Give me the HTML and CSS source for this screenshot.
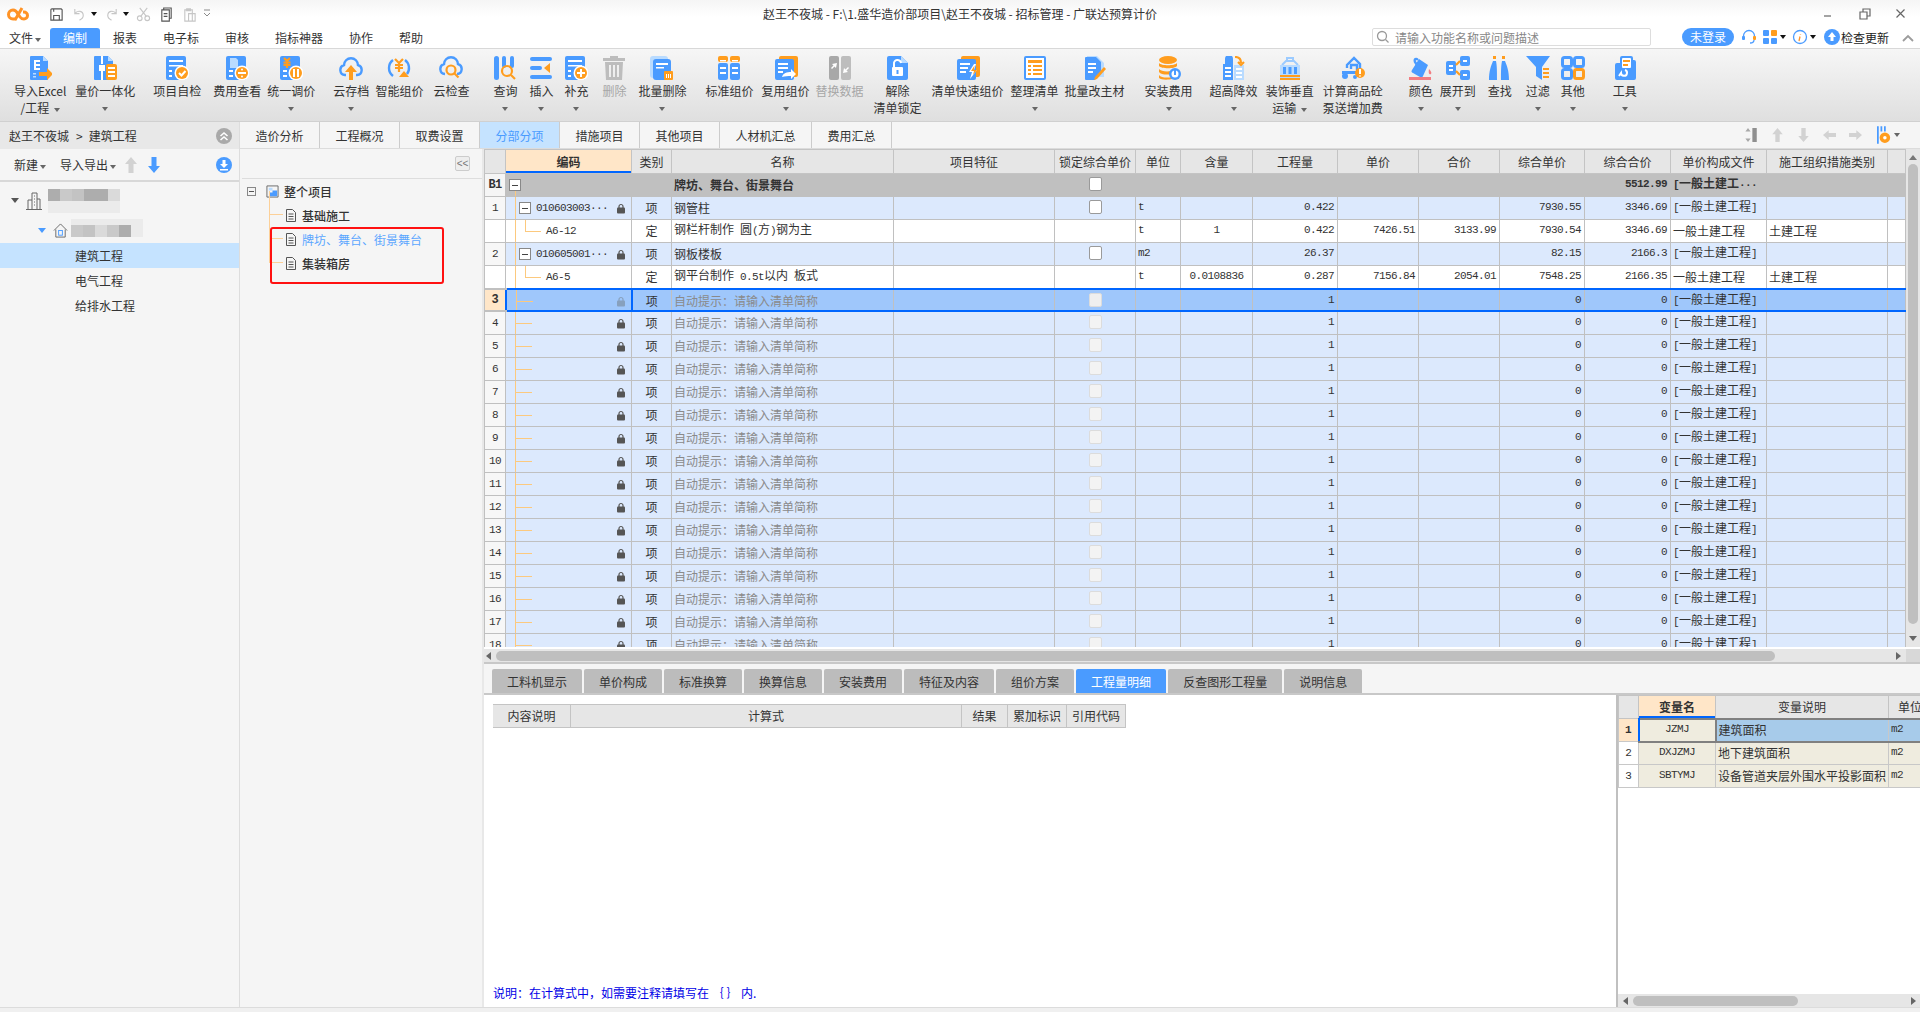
FILE: index.html
```html
<!DOCTYPE html>
<html lang="zh-CN">
<head>
<meta charset="utf-8">
<title>赵王不夜城 - 广联达预算计价</title>
<link rel="stylesheet" href="styles.css">
</head>
<body>
<svg class="defs"><symbol id="lock" viewBox="0 0 8 10"><path class="ln-lk" d="M2 5V3a2 2 0 0 1 4 0v2"/><rect x="0" y="4" width="8" height="6" rx="1"/></symbol><symbol id="docu" viewBox="0 0 10 13"><path class="ln-doc" d="M.5.5h6l3 3v9H.5zM2.500 5h5M2.500 7.500h5M2.500 10h5"/></symbol></svg>
<header class="titlebar">
  <div class="qa">
    <svg class="logo" viewBox="0 0 24 16"><path class="ln-o" d="M9 13H6a4 4 0 0 1 0-9c3 0 4 2 5 4l2 3c1 1.500 2 2 4 2a3.500 3.500 0 0 0 0-7h-1"/><path class="ln-o" d="M8 14l7-12"/></svg>
    <svg class="qi" viewBox="0 0 16 16"><path class="ln-d" d="M2 3a1 1 0 0 1 1-1h10l1 1v11H2zM5 14V9h6v5M5 2v3"/></svg>
    <svg class="qi" viewBox="0 0 16 16"><path class="ln-l" d="M3 2v5h5M3 7c3-4 9-3 9 2 0 3-2 4-4 5"/></svg>
    <i class="tri tri-k"></i>
    <svg class="qi" viewBox="0 0 16 16"><path class="ln-l" d="M13 2v5H8M13 7c-3-4-9-3-9 2 0 3 2 4 4 5"/></svg>
    <i class="tri tri-k"></i>
    <svg class="qi" viewBox="0 0 16 16"><path class="ln-l" d="M4 1l7 9M12 1l-7 9"/><circle class="ln-l" cx="4" cy="12" r="2.500"/><circle class="ln-l" cx="12" cy="12" r="2.500"/></svg>
    <svg class="qi" viewBox="0 0 16 16"><path class="ln-d" d="M3 3h8v12H3zM5 3V1h8v11h-2M5 7h4M5 10h4"/></svg>
    <svg class="qi" viewBox="0 0 16 16"><path class="ln-l" d="M3 3h8v12H3zM5 2h4v2H5zM7 7h7v8H7z"/></svg>
    <svg class="qi-s" viewBox="0 0 8 10"><path class="ln-g" d="M1 1h6M1 4l3 3 3-3"/></svg>
  </div>
  <div class="wintitle">赵王不夜城 - F:\1.盛华造价部项目\赵王不夜城 - 招标管理 - 广联达预算计价</div>
  <div class="winbtns">
    <svg viewBox="0 0 12 12"><path class="ln-w" d="M1 8h7"/></svg>
    <svg viewBox="0 0 12 12"><path class="ln-w" d="M1 4h7v7H1zM4 4V1h7v7H8"/></svg>
    <svg viewBox="0 0 12 12"><path class="ln-w" d="M1.500 1.500l8 8M9.500 1.500l-8 8"/></svg>
  </div>
</header>

<nav class="menubar">
  <span class="file">文件<i class="tri"></i></span>
  <a class="menu active">编制</a><a class="menu">报表</a><a class="menu">电子标</a><a class="menu">审核</a><a class="menu">指标神器</a><a class="menu">协作</a><a class="menu">帮助</a>
  <div class="search">
    <svg viewBox="0 0 14 14"><circle class="ln-s" cx="6" cy="6" r="4.500"/><path class="ln-s" d="M9.500 9.500l3 3"/></svg>
    <span>请输入功能名称或问题描述</span>
  </div>
  <span class="login">未登录</span>
  <svg class="mi mi-head" viewBox="0 0 16 16"><path class="ln-b" d="M2.500 9V7a5.500 5.500 0 0 1 11 0v2"/><rect class="b" x="1" y="7" width="3" height="4" rx="1"/><rect class="o" x="12" y="7" width="3" height="4" rx="1"/><path class="ln-b" d="M13 11c0 2-2 3-4 3"/></svg>
  <svg class="mi mi-grid" viewBox="0 0 16 16"><rect class="b" x="1" y="1" width="6" height="6" rx="1"/><rect class="o" x="9" y="1" width="6" height="6" rx="1"/><rect class="b" x="1" y="9" width="6" height="6" rx="1"/><rect class="b" x="9" y="9" width="6" height="6" rx="1"/></svg>
  <i class="tri tri-k"></i>
  <svg class="mi mi-info" viewBox="0 0 16 16"><circle class="ln-b" cx="8" cy="8" r="6.500"/><path class="ln-o1" d="M8.500 5v.5M8 7.500L7 12"/></svg>
  <i class="tri tri-k"></i>
  <svg class="mi mi-up" viewBox="0 0 16 16"><circle class="b" cx="8" cy="8" r="8"/><path class="w" d="M8 3l4 5H9.500v4h-3V8H4z"/></svg>
  <span class="update">检查更新</span>
  <svg class="mi-chev" viewBox="0 0 12 8"><path class="ln-g2" d="M1 7l5-5 5 5"/></svg>
</nav>

<section class="ribbon">
  <button class="rb g14"><svg viewBox="0 0 24 24"><path class="b" d="M3 0h12l5 5v18a1 1 0 0 1-1 1H3a1 1 0 0 1-1-1V1a1 1 0 0 1 1-1z"/><path class="lb" d="M15 0l5 5h-5z"/><path class="w" d="M6 4h6v2H8v2h4v2H8v2h4v2H6z"/><path class="lb" d="M5 17h3v1.500H5zM5 20h3v1.500H5z"/><path class="o" d="M11 16h8v-4l6 6-6 6v-4h-8z"/></svg><span class="lbl">导入Excel<br>/工程 <i class="tri"></i></span></button>
  <button class="rb g9"><svg viewBox="0 0 24 24"><path class="b" d="M2 0h13l5 5v18a1 1 0 0 1-1 1H2a1 1 0 0 1-1-1V1a1 1 0 0 1 1-1z"/><path class="lb" d="M15 0l5 5h-5z"/><path class="w" d="M8 0h2v8H8zM8 15h2v9H8zM6 9h6v6H6z"/><rect class="o" x="13" y="8" width="11" height="16" rx="2"/><path class="w" d="M15 11h7v2h-7zM15 15h7v2h-7zM15 19h7v2h-7z"/></svg><span class="lbl">量价一体化<i class="tri tri-b"></i></span></button>
  <button class="rb g18"><svg viewBox="0 0 24 24"><rect class="b" x="1" width="20" height="24" rx="2"/><path class="w" d="M4 4h14v2H4zM4 9h14v1.500H4zM4 14h3v2H4zM4 19h3v2H4z"/><circle class="w" cx="17" cy="17" r="7.500"/><circle class="o" cx="17" cy="17" r="6"/><path class="ln-wt" d="M14 17l2.500 2.500 4-4.500"/></svg><span class="lbl">项目自检</span></button>
  <button class="rb g12"><svg viewBox="0 0 24 24"><rect class="b" x="1" width="20" height="24" rx="2"/><path class="lb" d="M5 2h6l2 2v8H5z"/><path class="w" d="M4 14h4v2H4zM4 19h4v2H4z"/><circle class="w" cx="17" cy="17" r="7.500"/><circle class="o" cx="17" cy="17" r="6"/><path class="w" d="M13 16h8v2h-8z"/><circle class="w" cx="17" cy="13.500" r="1"/><circle class="w" cx="17" cy="20.500" r="1"/></svg><span class="lbl">费用查看</span></button>
  <button class="rb g6"><svg viewBox="0 0 24 24"><rect class="b" x="1" width="20" height="24" rx="2"/><path class="oln" d="M5 2l3 3 3-3M8 5v7M4.500 6.500h7M4.500 9h7"/><path class="w" d="M4 14h4v2H4zM4 19h4v2H4z"/><circle class="w" cx="17" cy="17" r="7.500"/><circle class="o" cx="17" cy="17" r="6"/><path class="w" d="M14 13h2v8h-2zM18 13h2v8h-2z"/></svg><span class="lbl">统一调价<i class="tri tri-b"></i></span></button>
  <button class="rb g18"><svg viewBox="0 0 24 24"><path class="ln-cloud" d="M7 19H6a5 5 0 0 1-1-9.800 7 7 0 0 1 14 0A5 5 0 0 1 18 19h-1"/><path class="o" d="M12 9l6 7h-4v8h-4v-8H6z"/></svg><span class="lbl">云存档<i class="tri tri-b"></i></span></button>
  <button class="rb g6"><svg viewBox="0 0 24 24"><path class="ln-cloud" d="M6 20A10 10 0 0 1 6 4M18 4a10 10 0 0 1 2 14"/><path class="oln" d="M8 3l4 4 4-4M12 7v9M8 9h8M8 12h8"/><path class="o" d="M17 15l5 6H12z"/></svg><span class="lbl">智能组价</span></button>
  <button class="rb g10"><svg viewBox="0 0 24 24"><path class="ln-cloud" d="M6 18a5 5 0 0 1-1-9.800 7 7 0 0 1 14 0A5 5 0 0 1 18 18"/><circle class="oln" cx="12" cy="14" r="4.500"/><path class="oln" d="M15.500 17.500l4 4"/></svg><span class="lbl">云检查</span></button>
  <button class="rb g24"><svg viewBox="0 0 24 24"><rect class="b" x="1" width="5" height="24" rx="2.500"/><rect class="b" x="9" width="4" height="12" rx="2"/><rect class="b" x="17" width="4" height="12" rx="2"/><circle class="oln" cx="14" cy="15" r="5"/><path class="oln" d="M18 19l4 4"/></svg><span class="lbl">查询<i class="tri tri-b"></i></span></button>
  <button class="rb g12"><svg viewBox="0 0 24 24"><rect class="b" x="1" y="1" width="22" height="4" rx="2"/><rect class="b" x="1" y="19" width="22" height="4" rx="2"/><rect class="b" x="1" y="10" width="12" height="4" rx="2"/><path class="o" d="M15 12l6-5v10z"/></svg><span class="lbl">插入<i class="tri tri-b"></i></span></button>
  <button class="rb g11"><svg viewBox="0 0 24 24"><rect class="b" x="1" width="20" height="24" rx="2"/><path class="w" d="M4 4h14v2H4zM4 9h14v1.500H4zM4 14h3v2H4zM4 19h3v2H4z"/><circle class="w" cx="17" cy="17" r="7.500"/><circle class="o" cx="17" cy="17" r="6"/><path class="w" d="M16 13h2v3h3v2h-3v3h-2v-3h-3v-2h3z"/></svg><span class="lbl">补充<i class="tri tri-b"></i></span></button>
  <button class="rb g14 dis"><svg viewBox="0 0 24 24"><path class="gf" d="M8 0h8v2h7v3H1V2h7zM3 6h18l-1 18H4zM7 9v12h2V9zM11 9v12h2V9zM15 9v12h2V9z" fill-rule="evenodd"/></svg><span class="lbl">删除</span></button>
  <button class="rb g12"><svg viewBox="0 0 24 24"><rect class="lb" x="0" width="18" height="22" rx="3"/><rect class="b" x="3" y="3" width="18" height="21" rx="3"/><path class="w" d="M6 7h12v2H6zM6 11h8v1.500H6z"/><rect class="o" x="14" y="15" width="9" height="9" rx="1"/><path class="w" d="M16 18h1v4h-1zM18 18h1v4h-1zM20 18h1v4h-1z"/></svg><span class="lbl">批量删除<i class="tri tri-b"></i></span></button>
  <button class="rb g19"><svg viewBox="0 0 24 24"><rect class="o" x="1" width="10" height="6" rx="2"/><rect class="o" x="13" width="10" height="6" rx="2"/><rect class="b" x="1" y="7" width="10" height="17" rx="2"/><rect class="b" x="13" y="7" width="10" height="17" rx="2"/><path class="w" d="M3 4h6v1.500H3zM15 4h6v1.500h-6zM3 11h6v2H3zM15 11h6v2h-6zM3 16h6v2H3zM15 16h6v2h-6z"/></svg><span class="lbl">标准组价</span></button>
  <button class="rb g8"><svg viewBox="0 0 24 24"><rect class="o" x="5" width="19" height="21" rx="2"/><rect class="b" x="1" y="3" width="19" height="21" rx="2"/><path class="w" d="M4 7h10v2H4zM4 11h10v2H4zM4 15h5v2H4z"/><path class="w" d="M8 21c1-4 5-5 9-5v-3l5 5-5 5v-3c-3 0-6 0-9 1z"/></svg><span class="lbl">复用组价<i class="tri tri-b"></i></span></button>
  <button class="rb g6 dis"><svg viewBox="0 0 24 24"><rect class="gd" x="1" width="10" height="24" rx="2"/><rect class="gf" x="13" width="10" height="24" rx="2"/><path class="w" d="M9 7l-1 5-1.500-1.500L4 13l-1-1 2.500-2.500L4 8zM15 17l1-5 1.500 1.500L20 11l1 1-2.500 2.500L20 16z"/></svg><span class="lbl">替换数据</span></button>
  <button class="rb g10"><svg viewBox="0 0 24 24"><path class="b" d="M3 0h12l7 7v15a2 2 0 0 1-2 2H3a2 2 0 0 1-2-2V2a2 2 0 0 1 2-2z"/><path class="lb" d="M15 0l7 7h-7z"/><rect class="w" x="6" y="11" width="11" height="9" rx="1"/><path class="ln-wt" d="M8 11V8a3.500 3.500 0 0 1 7-1"/><path class="b" d="M10.500 14h2v4h-2z"/></svg><span class="lbl">解除<br>清单锁定</span></button>
  <button class="rb g10"><svg viewBox="0 0 24 24"><rect class="o" x="5" width="19" height="21" rx="2"/><rect class="b" x="1" y="3" width="19" height="21" rx="2"/><path class="w" d="M4 7h10v2H4zM4 11h8v2H4zM4 15h6v2H4z"/><path class="w" d="M18 8l-5 8h3l-2 7 7-9h-3l2-6z"/><path class="o" d="M18.500 9.500l-3.500 5.500h3l-1 4 4-5h-3z"/></svg><span class="lbl">清单快速组价</span></button>
  <button class="rb g7"><svg viewBox="0 0 24 24"><rect class="b" x="1" width="22" height="24" rx="2"/><rect class="w" x="3" y="2" width="18" height="20"/><path class="o" d="M5 4h14v3H5zM5 9h3v2H5zM10 9h9v2h-9zM5 13h3v2H5zM10 13h9v2h-9zM5 17h3v2H5zM10 17h9v2h-9z"/></svg><span class="lbl">整理清单<i class="tri tri-b"></i></span></button>
  <button class="rb g6"><svg viewBox="0 0 24 24"><path class="lb" d="M4 0h10l7 7v14H4z"/><path class="b" d="M3 1h10l5 5v9l-6 9H3a1 1 0 0 1-1-1V2a1 1 0 0 1 1-1z"/><path class="w" d="M5 7h8v2H5zM5 11h8v2H5zM5 15h5v2H5z"/><path class="o" d="M21 11l2 2-9 10-3 1 1-3z"/></svg><span class="lbl">批量改主材</span></button>
  <button class="rb g20"><svg viewBox="0 0 24 24"><ellipse class="o" cx="11" cy="4" rx="9" ry="4"/><path class="o" d="M2 7c2 3 16 3 18 0v3c-2 3-16 3-18 0zM2 13c2 3 12 3 15 1l-2 4c-4 1-11 1-13-2zM2 19c2 3 9 3 13 2v2c-4 1-11 1-13-1z"/><circle class="b" cx="18" cy="18" r="6"/><circle class="w" cx="18" cy="18" r="3.500"/><path class="b" d="M17 14h2v5h-2z"/></svg><span class="lbl">安装费用<i class="tri tri-b"></i></span></button>
  <button class="rb g17"><svg viewBox="0 0 24 24"><path class="b" d="M3 3a4 4 0 0 1 8 0v21H1V8h2z"/><path class="lb" d="M12 9h10v15H12z"/><path class="w" d="M3 11h6v2H3zM3 15h6v2H3zM3 19h6v2H3z"/><path class="w" d="M14 12h6v2h-6zM14 16h6v2h-6zM14 20h6v2h-6z"/><path class="oln" d="M13 1c4 0 6 2 6 6M16 6l3 3 3-3"/></svg><span class="lbl">超高降效<i class="tri tri-b"></i></span></button>
  <button class="rb g8"><svg viewBox="0 0 24 24"><path class="ln-lb" d="M4 9l4-4h8l4 4M9 2h6v3H9z"/><rect class="lb" x="2" y="9" width="20" height="15"/><path class="b" d="M5 11h3v7H5zM10.500 11h3v7h-3zM16 11h3v7h-3z"/><path class="o" d="M2 19h20v2H2zM2 22h20v2H2z"/></svg><span class="lbl">装饰垂直<br>运输 <i class="tri"></i></span></button>
  <button class="rb g9"><svg viewBox="0 0 24 24"><path class="ln-cloud" d="M6 12V9l7-7 6 6v5M10 13V9h6v5"/><circle class="b" cx="4" cy="20" r="3"/><circle class="b" cx="14" cy="21" r="2"/><path class="b" d="M1 15h14v3H1z"/><circle class="o" cx="19" cy="17" r="5"/><path class="w" d="M18 13h2v5h-2zM18.500 19h1v2h-1z"/></svg><span class="lbl">计算商品砼<br>泵送增加费</span></button>
  <button class="rb g26"><svg viewBox="0 0 24 24"><path class="b" d="M10 3l9 6-5 11a2 2 0 0 1-3 1L4 17a2 2 0 0 1-1-3z"/><path class="ln-cloud" d="M9 4C7 2 5 3 6 6l2 3"/><path class="rd" d="M20 13c2 2 3 4 2 5s-3 0-2-5zM0 21h22v3H0z"/></svg><span class="lbl">颜色<i class="tri tri-b"></i></span></button>
  <button class="rb g7"><svg viewBox="0 0 24 24"><rect class="b" x="0" y="5" width="10" height="14" rx="2"/><rect class="b" x="14" y="0" width="10" height="10" rx="2"/><rect class="b" x="14" y="14" width="10" height="10" rx="2"/><path class="oln" d="M10 9l4-4M10 15l4 4"/><path class="w" d="M3 9h4v2H3zM3 13h4v2H3zM17 4h4v2h-4zM17 18h4v2h-4z"/></svg><span class="lbl">展开到<i class="tri tri-b"></i></span></button>
  <button class="rb g12"><svg viewBox="0 0 24 24"><path class="o" d="M5 0h3v3H5zM14 0h3v3h-3z"/><path class="b" d="M5 5h3c1 5 1 10 1 19H1c0-9 2-14 4-19zM14 5h3c2 5 4 10 4 19h-8c0-9 0-14 1-19z"/></svg><span class="lbl">查找</span></button>
  <button class="rb g14"><svg viewBox="0 0 24 24"><path class="b" d="M0 0h24l-8 11v13l-6-4v-9z"/><path class="o" d="M17 12h6v2h-6zM17 16h6v2h-6zM17 20h6v2h-6z"/></svg><span class="lbl">过滤<i class="tri tri-b"></i></span></button>
  <button class="rb g11"><svg viewBox="0 0 24 24"><rect class="ln-cloud2" x="1.500" y="1.500" width="9" height="9" rx="2"/><rect class="ln-cloud2" x="13.500" y="1.500" width="9" height="9" rx="2"/><rect class="ln-cloud2" x="1.500" y="13.500" width="9" height="9" rx="2"/><rect class="oln2" x="13.500" y="13.500" width="9" height="9" rx="2"/></svg><span class="lbl">其他<i class="tri tri-b"></i></span></button>
  <button class="rb g28"><svg viewBox="0 0 24 24"><path class="b" d="M7 2a2 2 0 0 1 2-2h9a2 2 0 0 1 2 2v2h1a2 2 0 0 1 2 2v16a2 2 0 0 1-2 2H4a2 2 0 0 1-2-2V9a2 2 0 0 1 2-2h3z"/><rect class="w" x="9" y="2" width="9" height="10" rx="1"/><path class="o" d="M10 4h7v2h-7zM10 8h5v2h-5z"/><path class="ln-wt" d="M12 14a3 3 0 1 1-4 3l-2 3"/></svg><span class="lbl">工具<i class="tri tri-b"></i></span></button>
</section>

<div class="workspace">
  <aside class="left">
    <div class="crumb"><span>赵王不夜城<span class="sep">&gt;</span>建筑工程</span>
      <svg class="circ" viewBox="0 0 16 16"><circle class="gm" cx="8" cy="8" r="8"/><path class="ln-wt2" d="M4.500 8L8 5l3.500 3M4.500 12L8 9l3.500 3"/></svg>
    </div>
    <div class="ltool">
      <span class="lt-a">新建<i class="tri"></i></span>
      <span class="lt-b">导入导出<i class="tri"></i></span>
      <svg class="arr" viewBox="0 0 12 16"><path class="gl" d="M6 0l6 7H8.500v9h-5V7H0z"/></svg>
      <svg class="arr arr2" viewBox="0 0 12 16"><path class="b" d="M6 16l6-7H8.500V0h-5v9H0z"/></svg>
      <svg class="circ" viewBox="0 0 16 16"><circle class="b" cx="8" cy="8" r="8"/><path class="w" d="M6.500 3h3v4H12L8 11 4 7h2.500zM4 12h8v1.500H4z"/></svg>
    </div>
    <div class="ltree">
      <div class="lrow lv0"><i class="tri-l"></i>
        <svg class="lic" viewBox="0 0 16 18"><path class="ln-dk" d="M0 17.500h16M2 17V8h4M6 17V1h5v16M11 7h3v10M8 4h1M8 7h1M8 10h1M8 13h1"/></svg>
        <svg class="mosaic" viewBox="0 0 72 24"><rect class="m1" width="12" height="12"/><rect class="m2" x="12" width="12" height="12"/><rect class="m3" x="24" width="12" height="12"/><rect class="m1" x="36" width="12" height="12"/><rect class="m1" x="48" width="12" height="12"/><rect class="m4" x="60" width="12" height="12"/><rect class="m5" y="12" width="72" height="12"/></svg>
      </div>
      <div class="lrow lv1"><i class="tri-l tri-lb"></i>
        <svg class="lic2" viewBox="0 0 16 16"><path class="ln-dk" d="M1 8l7-7 7 7M3 7v8h10V7"/><rect class="ln-bt" x="6" y="8" width="4" height="5"/></svg>
        <svg class="mosaic" viewBox="0 0 72 24"><rect class="m5" y="0" width="72" height="6"/><rect class="m2" y="6" width="12" height="12"/><rect class="m3" x="12" y="6" width="12" height="12"/><rect class="m4" x="24" y="6" width="12" height="12"/><rect class="m2" x="36" y="6" width="12" height="12"/><rect class="m1" x="48" y="6" width="12" height="12"/><rect class="m5" x="60" y="6" width="12" height="12"/></svg>
      </div>
      <div class="lrow lv2 sel">建筑工程</div>
      <div class="lrow lv2">电气工程</div>
      <div class="lrow lv2">给排水工程</div>
    </div>
  </aside>

  <main class="main">
    <nav class="tabs">
      <a class="tab">造价分析</a><a class="tab">工程概况</a><a class="tab">取费设置</a><a class="tab on">分部分项</a><a class="tab">措施项目</a><a class="tab">其他项目</a><a class="tab">人材机汇总</a><a class="tab">费用汇总</a>
      <div class="tabtools">
        <svg class="tt" viewBox="0 0 14 16"><path class="gl2" d="M3 0l3 4H0zM3 16l3-4H0z"/><rect class="gm2" x="8" y="0" width="5" height="16"/></svg>
        <svg class="tt" viewBox="0 0 12 16"><path class="gl" d="M6 0l6 7H8.500v9h-5V7H0z"/></svg>
        <svg class="tt" viewBox="0 0 12 16"><path class="gl" d="M6 16l6-7H8.500V0h-5v9H0z"/></svg>
        <svg class="tt" viewBox="0 0 16 12"><path class="gl" d="M0 6l7-6v3.500h9v5H7V12z"/></svg>
        <svg class="tt" viewBox="0 0 16 12"><path class="gl" d="M16 6L9 0v3.500H0v5h9V12z"/></svg>
        <svg class="tt tt-g" viewBox="0 0 16 20"><rect class="b" width="2" height="20"/><rect class="b" x="4" width="2" height="6"/><rect class="b" x="8" width="2" height="6"/><circle class="o" cx="9" cy="13" r="6"/><circle class="w" cx="9" cy="13" r="2"/></svg>
        <i class="tri"></i>
      </div>
    </nav>
    <div class="mainbody">
      <aside class="mid">
        <div class="midtool"><button class="collapse">&lt;&lt;</button></div>
        <div class="ptree">
          <div class="prow root"><i class="box"></i>
            <svg class="ric" viewBox="0 0 14 14"><path class="ln-dk" d="M1 1h12v12H1z"/><rect class="lb" x="3" y="3" width="4" height="3"/><path class="b" d="M4 12V8h3V6h5v6z"/></svg>
            整个项目</div>
          <div class="prow leaf"><svg class="doc"><use href="#docu"/></svg>基础施工</div>
          <div class="prow leaf cur"><svg class="doc"><use href="#docu"/></svg>牌坊、舞台、街景舞台</div>
          <div class="prow leaf"><svg class="doc"><use href="#docu"/></svg>集装箱房</div>
        </div>
        <div class="redbox"></div>
      </aside>

      <div class="content">
        <div class="gridwrap">
          <div class="gridclip">
            <table class="grid">
              <colgroup><col class="c0"><col class="c1"><col class="c2"><col class="c3"><col class="c4"><col class="c5"><col class="c6"><col class="c7"><col class="c8"><col class="c9"><col class="c10"><col class="c11"><col class="c12"><col class="c13"><col class="c14"><col></colgroup>
              <thead><tr><th></th><th class="hl">编码</th><th>类别</th><th>名称</th><th>项目特征</th><th>锁定综合单价</th><th>单位</th><th>含量</th><th>工程量</th><th>单价</th><th>合价</th><th>综合单价</th><th>综合合价</th><th>单价构成文件</th><th>施工组织措施类别</th><th></th></tr></thead>
              <tbody>
                <tr class="fb"><td class="rh">B1</td><td class="code"><i class="exp exp0"></i></td><td></td><td>牌坊、舞台、街景舞台</td><td></td><td class="ck"><i class="cb"></i></td><td></td><td></td><td></td><td></td><td></td><td></td><td class="n">5512.99</td><td><span class="m">[</span>一般土建工<span class="m">···</span></td><td></td><td></td></tr>
                <tr class="qd"><td class="rh">1</td><td class="code tl"><i class="exp"></i><span class="cd">010603003···</span><svg class="lk"><use href="#lock"/></svg></td><td class="c">项</td><td>钢管柱</td><td></td><td class="ck"><i class="cb"></i></td><td>t</td><td></td><td class="n">0.422</td><td></td><td></td><td class="n">7930.55</td><td class="n">3346.69</td><td><span class="m">[</span>一般土建工程<span class="m">]</span></td><td></td><td></td></tr>
                <tr class="de"><td class="rh"></td><td class="code tl sub"><span class="cd2">A6-12</span></td><td class="c">定</td><td>钢栏杆制作<span class="m">&nbsp;</span>圆<span class="m">(</span>方<span class="m">)</span>钢为主</td><td></td><td></td><td>t</td><td class="c m">1</td><td class="n">0.422</td><td class="n">7426.51</td><td class="n">3133.99</td><td class="n">7930.54</td><td class="n">3346.69</td><td>一般土建工程</td><td>土建工程</td><td></td></tr>
                <tr class="qd"><td class="rh">2</td><td class="code tl"><i class="exp"></i><span class="cd">010605001···</span><svg class="lk"><use href="#lock"/></svg></td><td class="c">项</td><td>钢板楼板</td><td></td><td class="ck"><i class="cb"></i></td><td>m2</td><td></td><td class="n">26.37</td><td></td><td></td><td class="n">82.15</td><td class="n">2166.3</td><td><span class="m">[</span>一般土建工程<span class="m">]</span></td><td></td><td></td></tr>
                <tr class="de"><td class="rh"></td><td class="code tl sub"><span class="cd2">A6-5</span></td><td class="c">定</td><td>钢平台制作<span class="m">&nbsp;0.5t</span>以内<span class="m">&nbsp;</span>板式</td><td></td><td></td><td>t</td><td class="c m">0.0108836</td><td class="n">0.287</td><td class="n">7156.84</td><td class="n">2054.01</td><td class="n">7548.25</td><td class="n">2166.35</td><td>一般土建工程</td><td>土建工程</td><td></td></tr>
                <tr class="qd auto cur"><td class="rh">3</td><td class="code tl br"><svg class="lk"><use href="#lock"/></svg></td><td class="c">项</td><td class="tip">自动提示：请输入清单简称</td><td></td><td class="ck"><i class="cb"></i></td><td></td><td></td><td class="n">1</td><td></td><td></td><td class="n">0</td><td class="n">0</td><td><span class="m">[</span>一般土建工程<span class="m">]</span></td><td></td><td></td></tr>
                <tr class="qd auto"><td class="rh">4</td><td class="code tl br"><svg class="lk"><use href="#lock"/></svg></td><td class="c">项</td><td class="tip">自动提示：请输入清单简称</td><td></td><td class="ck"><i class="cb"></i></td><td></td><td></td><td class="n">1</td><td></td><td></td><td class="n">0</td><td class="n">0</td><td><span class="m">[</span>一般土建工程<span class="m">]</span></td><td></td><td></td></tr>
                <tr class="qd auto"><td class="rh">5</td><td class="code tl br"><svg class="lk"><use href="#lock"/></svg></td><td class="c">项</td><td class="tip">自动提示：请输入清单简称</td><td></td><td class="ck"><i class="cb"></i></td><td></td><td></td><td class="n">1</td><td></td><td></td><td class="n">0</td><td class="n">0</td><td><span class="m">[</span>一般土建工程<span class="m">]</span></td><td></td><td></td></tr>
                <tr class="qd auto"><td class="rh">6</td><td class="code tl br"><svg class="lk"><use href="#lock"/></svg></td><td class="c">项</td><td class="tip">自动提示：请输入清单简称</td><td></td><td class="ck"><i class="cb"></i></td><td></td><td></td><td class="n">1</td><td></td><td></td><td class="n">0</td><td class="n">0</td><td><span class="m">[</span>一般土建工程<span class="m">]</span></td><td></td><td></td></tr>
                <tr class="qd auto"><td class="rh">7</td><td class="code tl br"><svg class="lk"><use href="#lock"/></svg></td><td class="c">项</td><td class="tip">自动提示：请输入清单简称</td><td></td><td class="ck"><i class="cb"></i></td><td></td><td></td><td class="n">1</td><td></td><td></td><td class="n">0</td><td class="n">0</td><td><span class="m">[</span>一般土建工程<span class="m">]</span></td><td></td><td></td></tr>
                <tr class="qd auto"><td class="rh">8</td><td class="code tl br"><svg class="lk"><use href="#lock"/></svg></td><td class="c">项</td><td class="tip">自动提示：请输入清单简称</td><td></td><td class="ck"><i class="cb"></i></td><td></td><td></td><td class="n">1</td><td></td><td></td><td class="n">0</td><td class="n">0</td><td><span class="m">[</span>一般土建工程<span class="m">]</span></td><td></td><td></td></tr>
                <tr class="qd auto"><td class="rh">9</td><td class="code tl br"><svg class="lk"><use href="#lock"/></svg></td><td class="c">项</td><td class="tip">自动提示：请输入清单简称</td><td></td><td class="ck"><i class="cb"></i></td><td></td><td></td><td class="n">1</td><td></td><td></td><td class="n">0</td><td class="n">0</td><td><span class="m">[</span>一般土建工程<span class="m">]</span></td><td></td><td></td></tr>
                <tr class="qd auto"><td class="rh">10</td><td class="code tl br"><svg class="lk"><use href="#lock"/></svg></td><td class="c">项</td><td class="tip">自动提示：请输入清单简称</td><td></td><td class="ck"><i class="cb"></i></td><td></td><td></td><td class="n">1</td><td></td><td></td><td class="n">0</td><td class="n">0</td><td><span class="m">[</span>一般土建工程<span class="m">]</span></td><td></td><td></td></tr>
                <tr class="qd auto"><td class="rh">11</td><td class="code tl br"><svg class="lk"><use href="#lock"/></svg></td><td class="c">项</td><td class="tip">自动提示：请输入清单简称</td><td></td><td class="ck"><i class="cb"></i></td><td></td><td></td><td class="n">1</td><td></td><td></td><td class="n">0</td><td class="n">0</td><td><span class="m">[</span>一般土建工程<span class="m">]</span></td><td></td><td></td></tr>
                <tr class="qd auto"><td class="rh">12</td><td class="code tl br"><svg class="lk"><use href="#lock"/></svg></td><td class="c">项</td><td class="tip">自动提示：请输入清单简称</td><td></td><td class="ck"><i class="cb"></i></td><td></td><td></td><td class="n">1</td><td></td><td></td><td class="n">0</td><td class="n">0</td><td><span class="m">[</span>一般土建工程<span class="m">]</span></td><td></td><td></td></tr>
                <tr class="qd auto"><td class="rh">13</td><td class="code tl br"><svg class="lk"><use href="#lock"/></svg></td><td class="c">项</td><td class="tip">自动提示：请输入清单简称</td><td></td><td class="ck"><i class="cb"></i></td><td></td><td></td><td class="n">1</td><td></td><td></td><td class="n">0</td><td class="n">0</td><td><span class="m">[</span>一般土建工程<span class="m">]</span></td><td></td><td></td></tr>
                <tr class="qd auto"><td class="rh">14</td><td class="code tl br"><svg class="lk"><use href="#lock"/></svg></td><td class="c">项</td><td class="tip">自动提示：请输入清单简称</td><td></td><td class="ck"><i class="cb"></i></td><td></td><td></td><td class="n">1</td><td></td><td></td><td class="n">0</td><td class="n">0</td><td><span class="m">[</span>一般土建工程<span class="m">]</span></td><td></td><td></td></tr>
                <tr class="qd auto"><td class="rh">15</td><td class="code tl br"><svg class="lk"><use href="#lock"/></svg></td><td class="c">项</td><td class="tip">自动提示：请输入清单简称</td><td></td><td class="ck"><i class="cb"></i></td><td></td><td></td><td class="n">1</td><td></td><td></td><td class="n">0</td><td class="n">0</td><td><span class="m">[</span>一般土建工程<span class="m">]</span></td><td></td><td></td></tr>
                <tr class="qd auto"><td class="rh">16</td><td class="code tl br"><svg class="lk"><use href="#lock"/></svg></td><td class="c">项</td><td class="tip">自动提示：请输入清单简称</td><td></td><td class="ck"><i class="cb"></i></td><td></td><td></td><td class="n">1</td><td></td><td></td><td class="n">0</td><td class="n">0</td><td><span class="m">[</span>一般土建工程<span class="m">]</span></td><td></td><td></td></tr>
                <tr class="qd auto"><td class="rh">17</td><td class="code tl br"><svg class="lk"><use href="#lock"/></svg></td><td class="c">项</td><td class="tip">自动提示：请输入清单简称</td><td></td><td class="ck"><i class="cb"></i></td><td></td><td></td><td class="n">1</td><td></td><td></td><td class="n">0</td><td class="n">0</td><td><span class="m">[</span>一般土建工程<span class="m">]</span></td><td></td><td></td></tr>
                <tr class="qd auto"><td class="rh">18</td><td class="code tl br"><svg class="lk"><use href="#lock"/></svg></td><td class="c">项</td><td class="tip">自动提示：请输入清单简称</td><td></td><td class="ck"><i class="cb"></i></td><td></td><td></td><td class="n">1</td><td></td><td></td><td class="n">0</td><td class="n">0</td><td><span class="m">[</span>一般土建工程<span class="m">]</span></td><td></td><td></td></tr>
              </tbody>
            </table>
          </div>
          <div class="vscroll"><i class="sb-up"></i><div class="vthumb"></div><i class="sb-dn"></i></div>
        </div>
        <div class="hscroll"><i class="sb-l"></i><div class="hthumb"></div><i class="sb-r"></i><i class="corner"></i></div>

        <nav class="btabs">
          <a class="btab">工料机显示</a><a class="btab">单价构成</a><a class="btab">标准换算</a><a class="btab">换算信息</a><a class="btab">安装费用</a><a class="btab">特征及内容</a><a class="btab">组价方案</a><a class="btab act">工程量明细</a><a class="btab">反查图形工程量</a><a class="btab">说明信息</a>
        </nav>
        <div class="bottom">
          <div class="calc">
            <div class="calchead"><span class="w1">内容说明</span><span class="w2">计算式</span><span class="w3">结果</span><span class="w4">累加标识</span><span class="w5">引用代码</span></div>
            <p class="note">说明：在计算式中，如需要注释请填写在 ｛ ｝ 内.</p>
          </div>
          <div class="vars">
            <div class="varbody">
              <table class="vt">
                <colgroup><col class="v0"><col class="v1"><col class="v2"><col></colgroup>
                <thead><tr><th></th><th class="hl">变量名</th><th>变量说明</th><th>单位</th></tr></thead>
                <tbody>
                  <tr class="vsel"><td class="rh">1</td><td class="vn vfocus">JZMJ</td><td>建筑面积</td><td class="u">m2</td></tr>
                  <tr><td class="rh">2</td><td class="vn">DXJZMJ</td><td>地下建筑面积</td><td class="u">m2</td></tr>
                  <tr><td class="rh">3</td><td class="vn">SBTYMJ</td><td>设备管道夹层外围水平投影面积</td><td class="u">m2</td></tr>
                </tbody>
              </table>
            </div>
            <div class="hscroll2"><i class="sb-l"></i><div class="hthumb2"></div><i class="sb-r"></i></div>
          </div>
        </div>
      </div>
    </div>
  </main>
</div>
<footer class="statusbar"></footer>
</body>
</html>
```

FILE: styles.css
```css
*{box-sizing:border-box}
html,body{margin:0;height:1012px;overflow:hidden}
body{display:flex;flex-direction:column;width:1920px;background:#f5f5f5;color:#333;font:12px/17px "Noto Sans CJK SC","Liberation Sans",sans-serif}
svg{display:block;flex:none}
.defs{width:0;height:0;position:absolute}

/* colour helpers for icons */
.b{fill:#4a9bff}.o{fill:#ff9d1e}.w{fill:#fff}.lb{fill:#b9dbff}.gf{fill:#bdbdbd}.gd{fill:#a8a8a8}.gl{fill:#d2d2d2}.gl2{fill:#a8a8a8}.gm{fill:#a9a9a9}.gm2{fill:#8f8f8f}.rd{fill:#f27d82}
.ln-o,.ln-o1,.ln-d,.ln-l,.ln-g,.ln-w,.ln-s,.ln-b,.ln-g2,.ln-wt,.ln-wt2,.ln-cloud,.ln-cloud2,.oln,.oln2,.ln-lb,.ln-dk,.ln-bt,.ln-doc,.ln-lk{fill:none;stroke-width:1}
.ln-o{stroke:#ff9326;stroke-width:3}
.ln-o1{stroke:#ff9326;stroke-width:1.3}
.ln-d{stroke:#555;stroke-width:1.2}
.ln-l{stroke:#c6c6c6;stroke-width:1.2}
.ln-g{stroke:#8a8a8a}
.ln-w{stroke:#666;stroke-width:1.2}
.ln-s{stroke:#9a9a9a;stroke-width:1.3}
.ln-b{stroke:#4a9bff;stroke-width:1.3}
.ln-g2{stroke:#9c9c9c;stroke-width:1.8}
.ln-wt{stroke:#fff;stroke-width:2}
.ln-wt2{stroke:#fff;stroke-width:1.6}
.ln-cloud{stroke:#4a9bff;stroke-width:2.4}
.ln-cloud2{stroke:#4a9bff;stroke-width:3}
.oln{stroke:#ff9d1e;stroke-width:2.2}
.oln2{stroke:#ff9d1e;stroke-width:3}
.ln-lb{stroke:#9ccbff;stroke-width:2}
.ln-dk{stroke:#666}
.ln-bt{stroke:#4a9bff}
.ln-doc{stroke:#555}
.ln-lk{stroke:currentColor;stroke-width:1.2}

.tri{display:inline-block;width:0;height:0;margin-left:2px;vertical-align:middle;border:3px solid transparent;border-top:4px solid #666;border-bottom:0}
.tri-k{border-top-color:#111;margin:0}
.tri-b{display:block;margin:8px auto 0}

/* title bar */
.titlebar{height:28px;flex:none;display:grid;grid-template-columns:1fr auto 1fr;align-items:center;background:linear-gradient(#f5f5f5,#fff 60%)}
.qa{display:flex;align-items:center;height:28px;padding-left:7px}
.logo{width:24px;height:16px;margin-right:10px}
.qi{width:15px;height:15px;margin-left:8px}
.qa .tri{margin:0 0 0 4px}
.qa .tri+.qi{margin-left:7px}
.qi-s{width:8px;height:10px;margin-left:6px}
.wintitle{color:#333;padding-bottom:1px}
.winbtns{display:flex;justify-content:flex-end;gap:24px;padding-right:13px}
.winbtns svg{width:12px;height:12px}

/* menu row */
.menubar{height:21px;flex:none;display:flex;align-items:flex-start;background:#fff;border-bottom:1px solid #d8d8d8;padding-left:9px}
.file{width:41px;line-height:20px}
.menu{padding:0 13px;height:20px;line-height:20px;color:#333}
.menu.active{background:#4a9bff;color:#fff;border-radius:3px 3px 0 0}
.search{display:flex;align-items:center;gap:5px;margin-left:auto;width:279px;height:18px;padding-left:3px;border:1px solid #ddd;border-radius:2px;color:#888;background:#fff}
.search svg{width:14px;height:14px}
.login{margin-left:31px;width:52px;height:18px;line-height:18px;text-align:center;background:#4a9bff;color:#fff;border-radius:9px}
.mi{width:16px;height:16px;margin-top:1px}
.mi-head{margin-left:7px}
.mi-grid{margin-left:5px}
.menubar>.tri{margin:7px 0 0 2px}
.mi-info{margin-left:6px}
.mi-up{margin-left:8px}
.update{margin-left:1px;color:#222;line-height:19px}
.mi-chev{width:12px;height:8px;margin:6px 6px 0 13px}

/* ribbon */
.ribbon{height:73px;flex:none;display:flex;background:linear-gradient(#f6f6f6,#dfdfdf);border-bottom:1px solid #d0d0d0;padding-top:7px}
.rb{flex:none;padding:0;margin:0;border:0;background:none;font:inherit;color:#333;display:flex;flex-direction:column;align-items:center;text-align:center}
.rb svg{width:24px;height:24px;margin-bottom:2px}
.lbl{display:block;line-height:17px;white-space:nowrap}
.dis{color:#a6a6a6}
.g5{margin-left:5px}.g6{margin-left:6px}.g7{margin-left:7px}.g8{margin-left:8px}.g9{margin-left:9px}.g10{margin-left:10px}.g11{margin-left:11px}.g12{margin-left:12px}.g14{margin-left:14px}.g15{margin-left:15px}.g16{margin-left:16px}.g17{margin-left:17px}.g18{margin-left:18px}.g19{margin-left:19px}.g20{margin-left:20px}.g24{margin-left:24px}.g26{margin-left:26px}.g28{margin-left:28px}

/* workspace */
.workspace{flex:1;display:flex;min-height:0}
.left{width:240px;flex:none;display:flex;flex-direction:column;border-right:1px solid #ddd;background:#f5f5f5}
.crumb{height:27px;display:flex;align-items:center;justify-content:space-between;padding:0 7px 0 9px;background:#e8e8e8}
.sep{margin:0 6px 0 7px}
.circ{width:16px;height:16px}
.ltool{height:33px;display:flex;align-items:center;padding:0 7px 0 14px;border-bottom:2px solid #d8d8d8}
.lt-a{width:46px}.lt-b{width:65px}
.arr{width:12px;height:16px}
.arr2{margin-left:11px;margin-right:auto}
.ltree{padding-top:6px}
.lrow{height:25px;display:flex;align-items:center;font-size:12px}
.tri-l{width:0;height:0;border:4px solid transparent;border-top:5px solid #555;border-bottom:0}
.tri-lb{border-top-color:#4a9bff}
.lv0{padding-left:11px}
.lic{width:16px;height:18px;margin-left:7px;margin-right:6px}
.lv1{padding-left:38px;margin-top:5px}
.lic2{width:15px;height:15px;margin-left:7px;margin-right:3px}
.mosaic{width:72px;height:24px}
.m1{fill:#adadad}.m2{fill:#c9c9c9}.m3{fill:#c3c3c3}.m4{fill:#dadada}.m5{fill:#ebebeb}
.lv2{padding-left:75px}
.sel{background:#c5e3ff}

.main{flex:1;min-width:0;display:flex;flex-direction:column}
.tabs{height:27px;flex:none;display:flex;background:#f5f5f5;border-bottom:1px solid #dcdcdc}
.tab{padding:0 15px;line-height:27px;border-right:1px solid #ccc;width:80px;white-space:nowrap;color:#333;text-align:center}
.tab:nth-child(7){width:92px}
.tab.on{background:#c5e3ff;color:#4a9bff}
.tabtools{margin-left:auto;display:flex;align-items:center;gap:13px;padding-right:20px}
.tt{width:13px;height:14px}
.tt-g{width:14px;height:18px;margin-left:2px}
.tabtools .tri{margin:0 0 0 -10px}

.mainbody{flex:1;display:flex;min-height:0}
.mid{position:relative;width:244px;flex:none;background:#f5f5f5;border-right:2px solid #e8e8e8}
.midtool{height:30px;display:flex;justify-content:flex-end;align-items:center;padding-right:12px;margin-left:2px;border-bottom:1px solid #ddd}
.collapse{width:15px;height:15px;padding:0;border:1px solid #ccc;border-radius:2px;background:#eee;color:#777;font:10px/12px "Liberation Sans",sans-serif}
.prow{position:relative;height:24px;display:flex;align-items:center;white-space:nowrap}
.root{padding-left:7px;font-weight:500}
.box{position:relative;width:9px;height:9px;border:1px solid #888;margin-right:10px}
.box::after{content:"";position:absolute;left:1px;right:1px;top:3px;height:1px;background:#555}
.ric{width:13px;height:13px;margin-right:5px}
.leaf{padding-left:46px;font-weight:500}
.leaf::before{content:"";position:absolute;left:29px;top:-12px;bottom:12px;width:13px;border-left:1px solid #fcd098;border-bottom:1px solid #fcd098}
.leaf.cur{color:#5ba6ff;font-weight:400}
.doc{width:10px;height:13px;margin-right:6px}
.redbox{position:absolute;left:30px;top:78px;width:174px;height:57px;border:2.5px solid #f11;border-radius:3px}

.content{flex:1;min-width:0;display:flex;flex-direction:column;background:#fff}
.gridwrap{height:498px;flex:none;display:flex}
.gridclip{flex:1;min-width:0;overflow:hidden;background:#fff;height:498px}
.grid{width:1422px;border-collapse:collapse;table-layout:fixed;font-size:12px}
.c0{width:21px}.c1{width:126px}.c2{width:40px}.c3{width:222px}.c4{width:161px}.c5{width:81px}.c6{width:45px}.c7{width:72px}.c8{width:85px}.c9{width:81px}.c10{width:81px}.c11{width:85px}.c12{width:86px}.c13{width:96px}.c14{width:121px}
.grid th{height:24px;padding:0;background:#e6e6e6;border:1px solid #c4c4c4;font-weight:400;white-space:nowrap;overflow:hidden}
.hl,.vt th.hl{background:#ffe6c8!important;font-weight:700!important;box-shadow:inset 0 -2px 0 #0066ff}
.grid td{height:23px;padding:0 2px 2px;border:1px solid #c0c0c0;white-space:nowrap;overflow:hidden}
.grid tr{background:#fff}
.grid .rh{padding:0;text-align:center;background:#fff;font:11px/1 "Liberation Mono",monospace;letter-spacing:-.6px}
.grid .fb{background:#c0c0c0;font-weight:700}
.grid .fb .rh{background:#f5f5f5;font-weight:700;font-size:12px}
.grid .qd{background:#dce9fd}
.grid .qd .rh{background:#f7f7f7}
.c{text-align:center}
.m,.grid .n,.grid td:nth-child(7){font-family:"Liberation Mono",monospace;font-size:11px;letter-spacing:-.6px}
.grid .n{text-align:right;padding-right:3px}
.grid .fb .n{font-weight:700}
.tip{color:#8a8a8a}
.code{position:relative;padding:0!important}
.code::before{content:"";position:absolute;left:9px;top:0;bottom:0;border-left:1px solid #fcc97e}
.fb .code::before{top:17px}
.br::after{content:"";position:absolute;left:9px;top:11px;width:17px;border-top:1px solid #fcc97e}
.exp{position:absolute;left:13px;top:5px;width:12px;height:12px;border:1px solid #888;background:#fff}
.exp::after{content:"";position:absolute;left:2px;right:2px;top:4.500px;height:1px;background:#444}
.exp0{left:3px}
.cd,.cd2{position:absolute;top:0;font:11px/22px "Liberation Mono",monospace;letter-spacing:-.6px}
.cd{left:30px}
.cd2{left:40px}
.sub::after{content:"";position:absolute;left:19px;top:-10px;width:15px;height:21px;border-left:1px solid #fcc97e;border-bottom:1px solid #fcc97e}
.lk{position:absolute;right:6px;top:6px;width:8px;height:11px;color:#555;fill:currentColor}
.cb{display:block;width:13px;height:14px;margin:0 auto;background:#fff;border:1px solid #9a9a9a;border-radius:2px}
.auto .cb{background:#f3f3f3;border-color:#dcdcdc}

/* selected row */
.grid .cur{background:#9fc7fb}
.grid .cur td{height:21px;padding-bottom:0;border-top:2px solid #0066ff;border-bottom:2px solid #0066ff}
.grid .cur .rh{background:#ffe6c8;font-weight:700;border-top-color:#c0c0c0;border-bottom-color:#c0c0c0;font-size:12px}
.grid .cur .code{border:2px solid #0066ff}
.cur .lk{color:#87a0bd}
.cur .cb{background:#efefef}

.vscroll{width:14px;flex:none;background:#e6e6e6;display:flex;flex-direction:column;align-items:center}
.sb-up{margin-top:6px;border:4px solid transparent;border-bottom:5px solid #777;border-top:0}
.vthumb{width:10px;flex:1;margin:4px 0 12px;background:#bfbfbf;border-radius:5px}
.sb-dn{margin-bottom:6px;border:4px solid transparent;border-top:5px solid #666;border-bottom:0}
.hscroll{height:15px;flex:none;display:flex;align-items:center;margin-top:2px;background:#e6e6e6;border-bottom:2px solid #c8c8c8}
.sb-l{margin:0 4px 0 2px;border:4px solid transparent;border-right:5px solid #666;border-left:0}
.sb-r{border:4px solid transparent;border-left:5px solid #666;border-right:0;margin-left:auto}
.hthumb{width:1279px;height:10px;margin-left:1px;background:#bfbfbf;border-radius:5px}
.corner{width:14px;height:13px;margin-left:5px;background:#d8d8d8}

/* bottom tabs */
.btabs{height:31px;flex:none;display:flex;gap:2px;align-items:flex-end;padding:0 0 0 8px;background:#f5f5f5;border-bottom:2px solid #c8c8c8}
.btab{height:24px;padding:0 15px;line-height:26px;background:#bcbcbc;border-radius:2px 2px 0 0;color:#333;white-space:nowrap}
.btab.act{background:#4a9bff;color:#fff}

.bottom{flex:1;min-height:0;display:flex}
.calc{width:1132px;flex:none;display:flex;flex-direction:column;padding:9px 0 0 9px}
.calchead{display:flex;width:633px;height:24px;background:#e6e6e6;border-top:1px solid #c4c4c4;border-bottom:1px solid #c4c4c4;border-right:1px solid #c4c4c4;text-align:center;line-height:22px}
.calchead span{border-right:1px solid #c4c4c4;white-space:nowrap}
.calchead span:last-child{border:0}
.w1{width:78px}.w2{width:391px}.w3{width:46px}.w4{width:59px}.w5{flex:1}
.note{margin:auto 0 0;padding-bottom:6px;color:#0000e6;font-size:12px;line-height:17px}

.vars{flex:1;min-width:0;display:flex;flex-direction:column;border-left:2px solid #c0c0c0;background:#fff}
.varbody{flex:1;overflow:hidden}
.vt{width:314px;table-layout:fixed;border-collapse:collapse}
.v0{width:20px}.v1{width:77px}.v2{width:173px}
.vt th{height:23px;padding:0;background:#e6e6e6;border:1px solid #c4c4c4;font-weight:400;overflow:hidden;white-space:nowrap}
.vt td{height:23px;padding:0 2px 2px;border:1px solid #c8c8c8;background:#efecdf;white-space:nowrap;overflow:hidden}
.vt .rh{padding:0;background:#fff;text-align:center;font:11px/1 "Liberation Mono",monospace}
.vt .vn{text-align:center;font:400 11px/1 "Liberation Mono",monospace;letter-spacing:-.6px}
.vt .u{font:11px/1 "Liberation Mono",monospace;letter-spacing:-.6px}
.vsel td{background:#a7cbea}
.vsel .rh{background:#ffe6c8!important;font-weight:700!important}
.vsel .vfocus{background:#efecdf;border:2px solid #808080;border-left-color:#0066ff}
.vsel td:nth-child(n+3){border-top:2px solid #808080;border-bottom:2px solid #808080}
.hscroll2{height:13px;flex:none;display:flex;align-items:center;background:#e6e6e6}
.hscroll2 .sb-l{margin:0 4px 0 5px}
.hthumb2{width:165px;height:10px;margin-left:1px;background:#bfbfbf;border-radius:5px}
.hscroll2 .sb-r{margin-right:4px}

.statusbar{height:5px;flex:none;background:#f0f0f0;border-top:1px solid #dcdcdc}
```
